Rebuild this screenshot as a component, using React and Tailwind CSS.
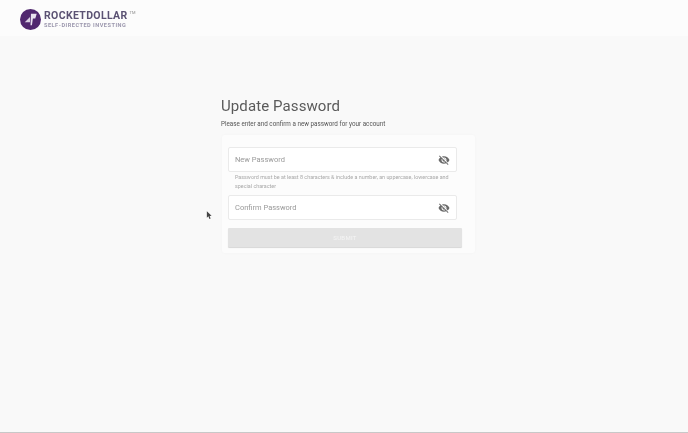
import React from 'react';

const Logo = () => (
  <div className="flex items-center gap-[3px]">
    <svg width="21" height="21" viewBox="0 0 22 22">
      <circle cx="11" cy="11" r="11" fill="#51286f" />
      <path d="M5 14 L10.5 8.5 L10.5 14 Z" fill="#d9cfe3" />
      <path d="M11.5 5 L17.5 5 L16 10 L13.5 10 L12.5 17 L11 17 Z" fill="#e9e2ef" />
    </svg>
    <div className="flex flex-col">
      <div className="flex items-start">
        <span className="text-[10.5px] leading-[12px] font-bold tracking-[0.35px] text-[#5b5273]">ROCKETDOLLAR</span>
        <span className="text-[4px] leading-[6px] ml-[2px] text-[#888]">TM</span>
      </div>
      <span className="text-[5.6px] leading-[7px] font-bold tracking-[0.5px] text-[#9b97ad]">SELF-DIRECTED INVESTING</span>
    </div>
  </div>
);

const EyeOffIcon = () => (
  <svg width="12" height="12" viewBox="0 0 24 24" fill="#6a6a6a">
    <path d="M12 7c2.76 0 5 2.24 5 5 0 .65-.13 1.26-.36 1.83l2.92 2.92c1.51-1.26 2.7-2.89 3.43-4.75-1.73-4.39-6-7.5-11-7.5-1.4 0-2.74.25-3.98.7l2.16 2.16C10.74 7.13 11.35 7 12 7zM2 4.27l2.28 2.28.46.46C3.08 8.3 1.78 10.02 1 12c1.73 4.39 6 7.5 11 7.5 1.55 0 3.03-.3 4.38-.84l.42.42L19.73 22 21 20.73 3.27 3 2 4.27zM7.53 9.8l1.55 1.55c-.05.21-.08.43-.08.65 0 1.66 1.34 3 3 3 .22 0 .44-.03.65-.08l1.55 1.55c-.67.33-1.41.53-2.2.53-2.76 0-5-2.24-5-5 0-.79.2-1.53.53-2.2zm4.31-.78l3.15 3.15.02-.16c0-1.66-1.34-3-3-3l-.17.01z" />
  </svg>
);

const Field = ({ label }) => (
  <div className="flex items-center justify-between h-[25px] w-[229px] pl-[6px] pr-[6px] bg-white border border-[#eaeaea] rounded-[2px]">
    <span className="text-[7.5px] text-[#999999]">{label}</span>
    <EyeOffIcon />
  </div>
);

export default function App() {
  return (
    <div className="relative flex flex-col h-[433px] w-[688px] overflow-hidden bg-[#f9f9f9] border-b border-[#c8c8c8] font-['Roboto',sans-serif]">
      <div className="flex flex-col blur-[0.4px]">
        {/* Encabezado */}
        <header className="flex items-center h-[36px] pl-[20px] pt-[2px] bg-[#fcfcfc] shrink-0">
          <Logo />
        </header>

        {/* Formulario */}
        <main className="flex flex-col w-[254px] ml-[221px] mt-[60px]">
          <h1 className="text-[15px] leading-[20px] tracking-[0.1px] text-[#5a5a5a]">Update Password</h1>
          <p className="mt-[4px] text-[6.3px] leading-[9px] text-[#555555]">Please enter and confirm a new password for your account</p>

          <div className="flex flex-col mt-[6px] ml-px pt-[12px] pl-[6px] h-[118px] bg-[#fcfcfc] rounded-[3px] shadow-[0_0_3px_rgba(0,0,0,0.03)]">
            <Field label="New Password" />
            <p className="w-[222px] mt-[1px] ml-[7px] text-[5.4px] leading-[9px] text-[#a8a8a8]">
              Password must be at least 8 characters &amp; include a number, an uppercase, lowercase and special character
            </p>
            <div className="mt-[4px]">
              <Field label="Confirm Password" />
            </div>
            <button className="flex items-center justify-center w-[234px] h-[19px] mt-[8px] bg-[#e3e3e3] rounded-[1px] shadow-[0_1px_1px_rgba(0,0,0,0.15)] text-[6px] tracking-[0.3px] text-[#f5f5f5]">
              SUBMIT
            </button>
          </div>
        </main>
      </div>

      {/* Cursor */}
      <svg className="absolute left-[206px] top-[211px]" width="6" height="9" viewBox="0 0 7 10">
        <path d="M1 0 L1 7.5 L2.8 6 L4 9 L5.4 8.4 L4.2 5.6 L6.5 5.4 Z" fill="#444" />
      </svg>
    </div>
  );
}
